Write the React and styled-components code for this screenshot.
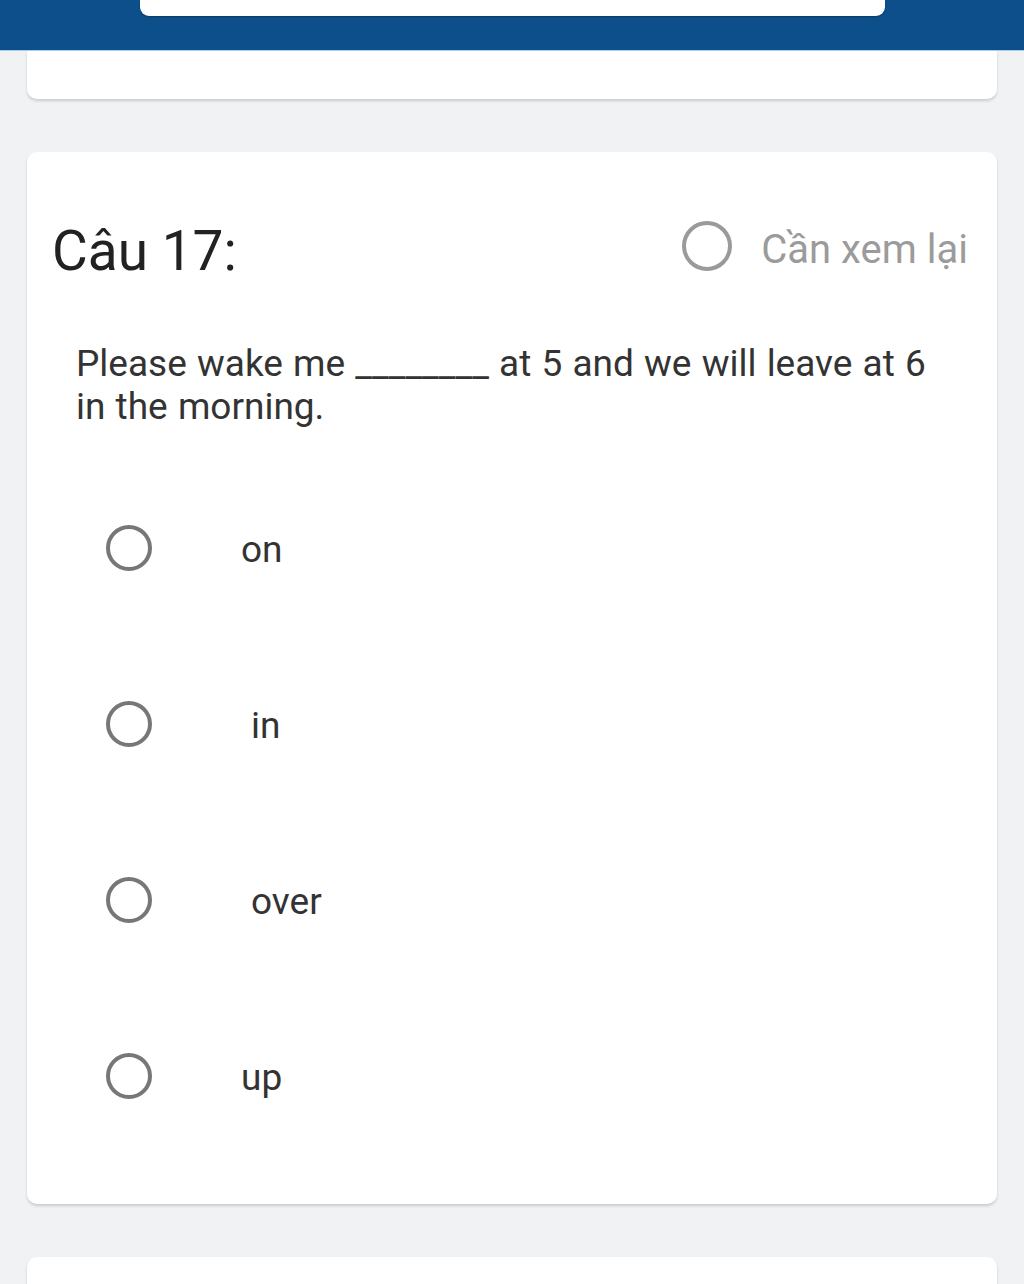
import React from "react";
import styled, { createGlobalStyle } from "styled-components";

const Global = createGlobalStyle`
  html, body { margin: 0; padding: 0; background: #f1f2f4; }
  body { font-family: Roboto, "Noto Sans", "Liberation Sans", sans-serif; }
  * { box-sizing: border-box; }
`;

const Page = styled.div`
  width: 1024px;
  min-height: 1284px;
  background: #f1f2f4;
  overflow: hidden;
`;

const TopBar = styled.header`
  height: 50px;
  background: #0c4f8b;
  display: flex;
  justify-content: flex-start;
  padding-left: 140px;
  box-shadow: 0 1px 0 #9fd0f0;
  position: relative;
  z-index: 2;
`;

const SearchStub = styled.div`
  width: 745px;
  height: 16px;
  background: #ffffff;
  border-radius: 0 0 9px 9px;
  box-shadow: 0 1px 2px rgba(0, 0, 0, 0.25);
`;

const Stack = styled.main`
  display: flex;
  flex-direction: column;
  gap: 53px;
  padding: 0 27px;
`;

const Card = styled.section`
  background: #ffffff;
  border-radius: ${(p) => (p.$cut === "top" ? "0 0 10px 10px" : p.$cut === "bottom" ? "10px 10px 0 0" : "10px")};
  box-shadow: 0 2px 3px rgba(0, 0, 0, 0.16);
  height: ${(p) => (p.$height ? `${p.$height}px` : "auto")};
`;

const QuestionCard = styled(Card)`
  padding: 59px 29px 40px 25px;
`;

const HeadRow = styled.div`
  display: flex;
  align-items: center;
  justify-content: space-between;
  height: 72px;
`;

const Title = styled.h2`
  margin: 0;
  font-size: 55px;
  font-weight: 400;
  color: #222;
  line-height: 1;
  padding-top: 8px;
`;

const Review = styled.label`
  display: flex;
  align-items: center;
  gap: 29px;
  color: #9b9b9b;
  font-size: 40px;
  line-height: 1;
  padding-top: 6px;
`;

const Ring = styled.span`
  display: inline-block;
  flex: none;
  width: ${(p) => p.$size}px;
  height: ${(p) => p.$size}px;
  border: 4px solid ${(p) => p.$color};
  border-radius: 50%;
  margin-top: ${(p) => p.$lift || 0}px;
`;

const Question = styled.p`
  margin: 59px 0 0 24px;
  font-size: 37px;
  line-height: 43px;
  color: #333;
  max-width: 870px;
  word-spacing: 1px;
`;

const Options = styled.ul`
  list-style: none;
  margin: 32px 0 0 0;
  padding: 0 0 0 54px;
`;

const Option = styled.li`
  display: flex;
  align-items: center;
  height: 176px;
`;

const OptionText = styled.span`
  margin-left: ${(p) => p.$indent}px;
  font-size: 37px;
  color: #333;
  padding-top: 2px;
`;

const options = [
  { text: "on", indent: 89 },
  { text: "in", indent: 99 },
  { text: "over", indent: 99 },
  { text: "up", indent: 89 },
];

export default function App() {
  return (
    <Page>
      <Global />
      <TopBar>
        <SearchStub />
      </TopBar>
      <Stack>
        <Card $cut="top" $height={49} />
        <QuestionCard>
          <HeadRow>
            <Title>Câu 17:</Title>
            <Review>
              <Ring $size={50} $color="#9a9a9a" $lift={-8} />
              Cần xem lại
            </Review>
          </HeadRow>
          <Question>
            Please wake me ________ at 5 and we will leave at 6 in the morning.
          </Question>
          <Options>
            {options.map((o) => (
              <Option key={o.text}>
                <Ring $size={46} $color="#777" />
                <OptionText $indent={o.indent}>{o.text}</OptionText>
              </Option>
            ))}
          </Options>
        </QuestionCard>
        <Card $cut="bottom" $height={60} />
      </Stack>
    </Page>
  );
}
